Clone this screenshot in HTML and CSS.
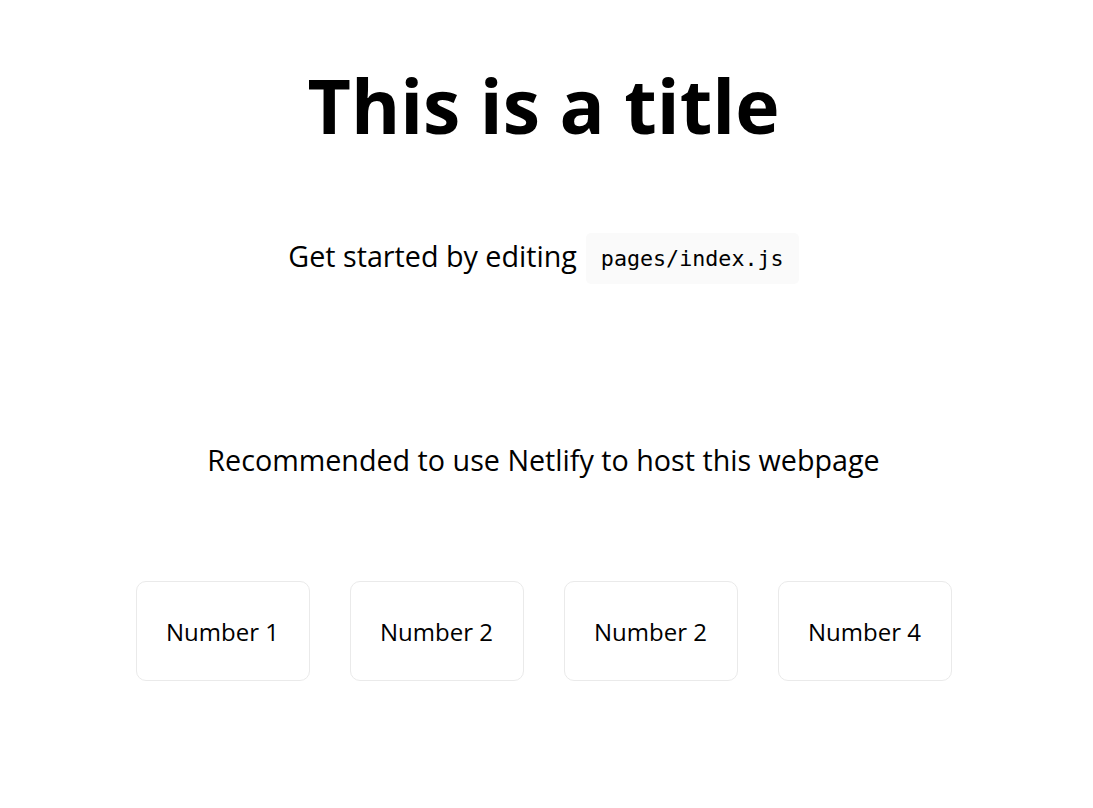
FILE: index.html
```html
<!DOCTYPE html>
<html>
<head>
<meta charset="utf-8">
<link rel="stylesheet" href="styles.css">
</head>
<body>
<main class="main">
  <h1 class="title">This is a title</h1>
  <p class="description"><span class="desc-text">Get started by editing</span> <code class="code">pages/index.js</code></p>
  <p class="recommend">Recommended to use Netlify to host this webpage</p>
  <div class="grid">
    <div class="card">Number 1</div>
    <div class="card">Number 2</div>
    <div class="card">Number 2</div>
    <div class="card">Number 4</div>
  </div>
</main>
</body>
</html>
```
FILE: styles.css
```css
html, body {
  margin: 0;
  padding: 0;
  background: #fff;
  color: #000;
  font-family: "Open Sans", "Noto Sans", sans-serif;
}
.main {
  display: flex;
  flex-direction: column;
  align-items: center;
  padding-right: 6px;
}
.title {
  margin: 62px 0 0;
  font-size: 75px;
  line-height: 1.15;
  font-weight: 700;
}
.description {
  margin: 85px 0 0;
  font-size: 28.7px;
  line-height: 1.5;
  display: flex;
  align-items: center;
  gap: 9px;
}
.desc-text {
  padding-bottom: 7px;
}
.code {
  background: #fafafa;
  border-radius: 5px;
  padding: 12px 15px;
  font-family: "DejaVu Sans Mono", monospace;
  font-size: 21.7px;
  line-height: 27px;
}
.recommend {
  margin: 154px 0 0;
  font-size: 28.7px;
  line-height: 1.5;
}
.grid {
  display: flex;
  gap: 40px;
  margin-top: 100px;
}
.card {
  width: 174px;
  height: 100px;
  box-sizing: border-box;
  border: 1px solid #eaeaea;
  border-radius: 10px;
  display: flex;
  align-items: center;
  justify-content: center;
  font-size: 24px;
}
```
